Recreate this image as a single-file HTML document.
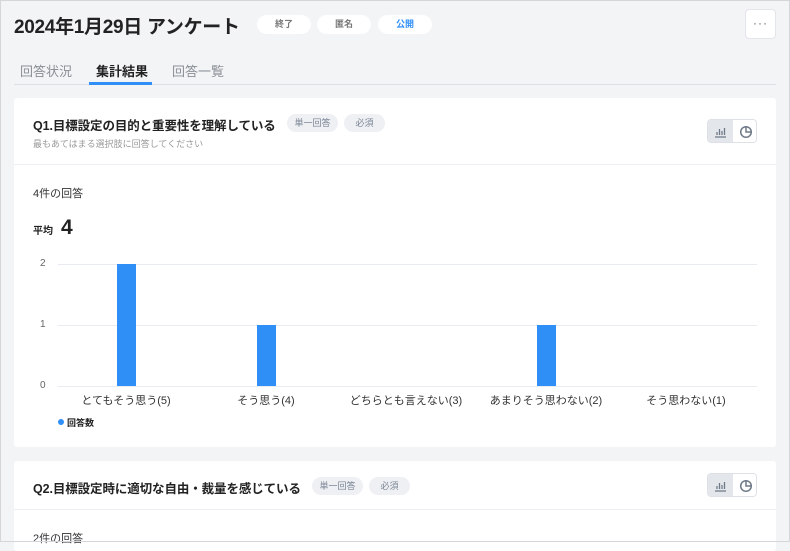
<!DOCTYPE html>
<html><head><meta charset="utf-8"><style>
*{margin:0;padding:0;box-sizing:border-box}
body{width:790px;height:542px;overflow:hidden;background:#f3f4f6;font-family:"Liberation Sans","Noto Sans CJK JP",sans-serif;position:relative;color:#222}
.frame{position:absolute;left:0;top:0;width:790px;height:542px;border:1px solid #d4d6d9;pointer-events:none;z-index:5}
.a{position:absolute;white-space:nowrap}
.pill{position:absolute;height:19px;border-radius:10px;background:#fff;font-size:9px;font-weight:bold;color:#777;text-align:center;line-height:19px}
.tag{position:absolute;height:18px;border-radius:9px;background:#eef0f3;font-size:9px;color:#7b8594;text-align:center;line-height:18px}
.card{position:absolute;left:14px;width:762px;background:#fff;border-radius:3px}
.grid{position:absolute;left:58px;width:699px;height:1px;background:#e8ebef}
.bar{position:absolute;width:19px;background:#2f8ff7}
.yl{position:absolute;left:40px;font-size:10px;color:#666}
.xl{position:absolute;top:392px;font-size:11px;color:#333;width:160px;text-align:center}
.tog{position:absolute;width:50px;height:24px;border:1px solid #dde1e6;border-radius:4px;background:#fff;overflow:hidden}
.tog .l{position:absolute;left:0;top:0;width:25px;height:24px;background:#e3e7ec}
</style></head><body>
<div class="frame"></div>
<div class="a" style="left:14px;top:12px;font-size:19px;font-weight:bold;color:#222;letter-spacing:-0.3px">2024年1月29日 アンケート</div>
<div class="pill" style="left:257px;top:15px;width:54px">終了</div>
<div class="pill" style="left:317px;top:15px;width:54px">匿名</div>
<div class="pill" style="left:378px;top:15px;width:54px;color:#2f8ff7">公開</div>
<div class="a" style="left:745px;top:9px;width:31px;height:30px;background:#fff;border:1px solid #e2e5e9;border-radius:4px;text-align:center;line-height:26px;font-size:12px;color:#667;letter-spacing:1px">···</div>
<div class="a" style="left:20px;top:61px;font-size:13px;color:#8a8f96">回答状況</div>
<div class="a" style="left:96px;top:61px;font-size:13px;font-weight:bold;color:#222">集計結果</div>
<div class="a" style="left:172px;top:61px;font-size:13px;color:#8a8f96">回答一覧</div>
<div class="a" style="left:14px;top:84px;width:762px;height:1px;background:#dde1e6"></div>
<div class="a" style="left:89px;top:82px;width:63px;height:3px;background:#2f8ff7"></div>

<div class="card" style="top:98px;height:349px">
<div style="position:absolute;left:0;top:66px;width:762px;height:1px;background:#eceef1"></div>
</div>
<div class="a" style="left:33px;top:115px;font-size:12.5px;font-weight:bold;letter-spacing:-0.1px">Q1.目標設定の目的と重要性を理解している</div>
<div class="tag" style="left:287px;top:114px;width:51px">単一回答</div>
<div class="tag" style="left:344px;top:114px;width:41px">必須</div>
<div class="a" style="left:33px;top:137px;font-size:9px;color:#999">最もあてはまる選択肢に回答してください</div>
<div class="tog" style="left:707px;top:119px"><div class="l"></div>
<svg style="position:absolute;left:6px;top:6px" width="13" height="12" viewBox="0 0 13 12"><path d="M1 11h11M3 9V6M5.5 9V3M8 9V5M10.5 9V2" stroke="#6f7a88" stroke-width="1.3" fill="none"/></svg>
<svg style="position:absolute;left:31px;top:5px" width="14" height="14" viewBox="0 0 14 14"><circle cx="7" cy="7" r="5.3" stroke="#6f7a88" stroke-width="1.5" fill="none"/><path d="M7 2v5h5" stroke="#6f7a88" stroke-width="1.5" fill="none"/></svg>
</div>
<div class="a" style="left:33px;top:185px;font-size:11px;color:#333">4件の回答</div>
<div class="a" style="left:33px;top:222px;font-size:10px;font-weight:bold">平均</div>
<div class="a" style="left:61px;top:216px;font-size:21px;font-weight:bold">4</div>
<div class="grid" style="top:264px"></div>
<div class="grid" style="top:325px"></div>
<div class="grid" style="top:386px"></div>
<div class="yl" style="top:258px">2</div>
<div class="yl" style="top:319px">1</div>
<div class="yl" style="top:380px">0</div>
<div class="bar" style="left:117px;top:264px;height:122px"></div>
<div class="bar" style="left:257px;top:325px;height:61px"></div>
<div class="bar" style="left:537px;top:325px;height:61px"></div>
<div class="xl" style="left:46px">とてもそう思う(5)</div>
<div class="xl" style="left:186px">そう思う(4)</div>
<div class="xl" style="left:326px">どちらとも言えない(3)</div>
<div class="xl" style="left:466px">あまりそう思わない(2)</div>
<div class="xl" style="left:606px">そう思わない(1)</div>
<div class="a" style="left:58px;top:419px;width:6px;height:6px;border-radius:50%;background:#2f8ff7"></div>
<div class="a" style="left:67px;top:416px;font-size:9px;font-weight:bold">回答数</div>

<div class="card" style="top:461px;height:90px">
<div style="position:absolute;left:0;top:48px;width:762px;height:1px;background:#eceef1"></div>
</div>
<div class="a" style="left:33px;top:478px;font-size:12.5px;font-weight:bold;letter-spacing:-0.1px">Q2.目標設定時に適切な自由・裁量を感じている</div>
<div class="tag" style="left:312px;top:477px;width:51px">単一回答</div>
<div class="tag" style="left:369px;top:477px;width:41px">必須</div>
<div class="tog" style="left:707px;top:473px"><div class="l"></div>
<svg style="position:absolute;left:6px;top:6px" width="13" height="12" viewBox="0 0 13 12"><path d="M1 11h11M3 9V6M5.5 9V3M8 9V5M10.5 9V2" stroke="#6f7a88" stroke-width="1.3" fill="none"/></svg>
<svg style="position:absolute;left:31px;top:5px" width="14" height="14" viewBox="0 0 14 14"><circle cx="7" cy="7" r="5.3" stroke="#6f7a88" stroke-width="1.5" fill="none"/><path d="M7 2v5h5" stroke="#6f7a88" stroke-width="1.5" fill="none"/></svg>
</div>
<div class="a" style="left:33px;top:530px;font-size:11px;color:#333">2件の回答</div>
</body></html>
